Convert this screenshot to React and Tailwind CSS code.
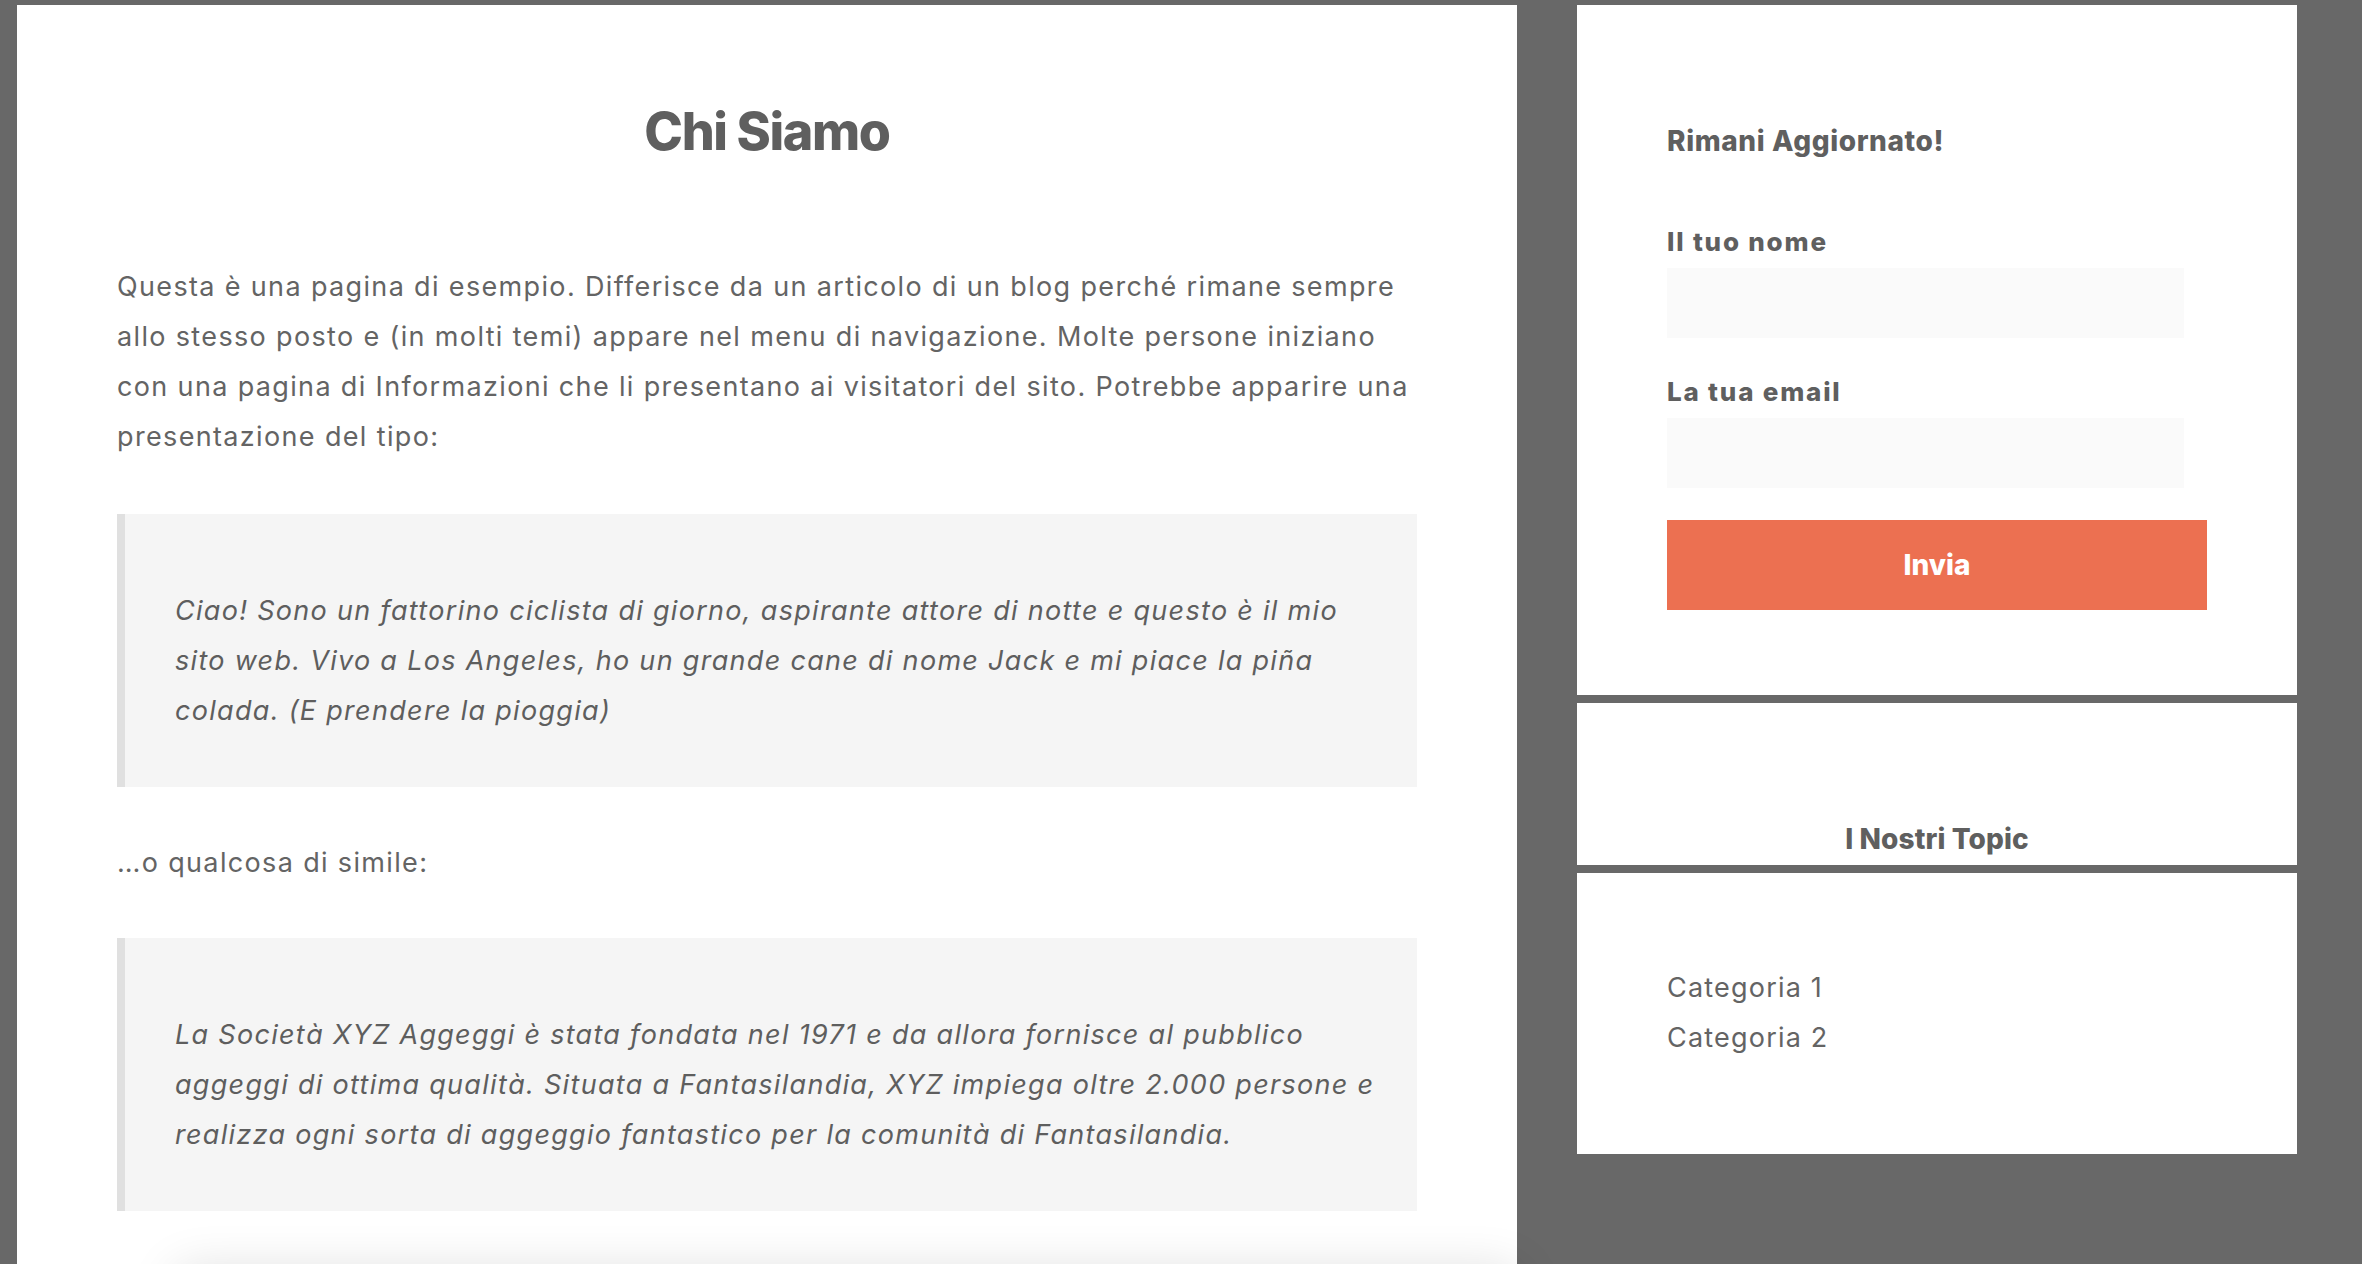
import React from 'react';

const Quote = ({ lines, className = '' }) => (
    <blockquote className={`border-l-[8px] border-[#e0e0e0] bg-[#f5f5f5] pl-[50px] pr-[50px] pt-[72px] pb-[51px] ${className}`}>
        <p className="text-[27px] leading-[50px] italic tracking-[1.3px] whitespace-nowrap text-[#5e5e5e]">
            {lines.map((line, i) => (
                <React.Fragment key={i}>
                    {line}
                    {i < lines.length - 1 && <br />}
                </React.Fragment>
            ))}
        </p>
    </blockquote>
);

const App = () => {
    return (
        <div className="min-h-screen bg-[#686868] pl-[17px] pt-[5px] flex items-start gap-[60px] font-['Inter',sans-serif] text-[#646464]">
            <main className="w-[1500px] shrink-0 bg-white px-[100px] pt-[97px]">
                <h1 className="text-center text-[52px] leading-[60px] font-extrabold tracking-[-1.4px] text-[#5f5f5f]">Chi Siamo</h1>

                <p className="mt-[100px] text-[27px] leading-[50px] tracking-[1.35px] whitespace-nowrap">
                    Questa è una pagina di esempio. Differisce da un articolo di un blog perché rimane sempre<br />
                    allo stesso posto e (in molti temi) appare nel menu di navigazione. Molte persone iniziano<br />
                    con una pagina di Informazioni che li presentano ai visitatori del sito. Potrebbe apparire una<br />
                    presentazione del tipo:
                </p>

                <Quote
                    className="mt-[52px]"
                    lines={[
                        'Ciao! Sono un fattorino ciclista di giorno, aspirante attore di notte e questo è il mio',
                        'sito web. Vivo a Los Angeles, ho un grande cane di nome Jack e mi piace la piña',
                        'colada. (E prendere la pioggia)'
                    ]}
                />

                <p className="mt-[51px] text-[27px] leading-[50px] tracking-[1.35px]">…o qualcosa di simile:</p>

                <Quote
                    className="mt-[50px]"
                    lines={[
                        'La Società XYZ Aggeggi è stata fondata nel 1971 e da allora fornisce al pubblico',
                        'aggeggi di ottima qualità. Situata a Fantasilandia, XYZ impiega oltre 2.000 persone e',
                        'realizza ogni sorta di aggeggio fantastico per la comunità di Fantasilandia.'
                    ]}
                />

                {/* footer card peeking in from below */}
                <div className="mt-[60px] ml-[60px] -mr-[100px] h-[120px] bg-white shadow-[0_0_50px_rgba(0,0,0,0.14)]"></div>
            </main>

            <aside className="w-[720px] shrink-0 flex flex-col gap-2">
                <section className="bg-white px-[90px] pt-[116px] pb-[85px]">
                    <h3 className="text-[28px] leading-[40px] font-extrabold tracking-[0.6px] text-[#5f5f5f]">Rimani Aggiornato!</h3>

                    <label className="mt-[61px] block text-[26px] leading-[40px] font-extrabold tracking-[1.8px] text-[#5f5f5f]">Il tuo nome</label>
                    <input type="text" className="mt-[6px] block w-[517px] h-[70px] bg-[#fafafa] outline-none" />

                    <label className="mt-[34px] block text-[26px] leading-[40px] font-extrabold tracking-[1.8px] text-[#5f5f5f]">La tua email</label>
                    <input type="email" className="mt-[6px] block w-[517px] h-[70px] bg-[#fafafa] outline-none" />

                    <button type="button" className="mt-[32px] block w-full h-[90px] bg-[#ec7051] text-white text-[28px] font-extrabold">
                        Invia
                    </button>
                </section>

                <section className="bg-white px-[90px] pt-[116px] pb-[6px] text-center">
                    <h3 className="text-[28px] leading-[40px] font-extrabold tracking-[0.1px] text-[#5f5f5f]">I Nostri Topic</h3>
                </section>

                <section className="bg-white px-[90px] pt-[90px] pb-[91px]">
                    <ul className="text-[27px] leading-[50px] tracking-[1.2px]">
                        <li>Categoria 1</li>
                        <li>Categoria 2</li>
                    </ul>
                </section>
            </aside>
        </div>
    );
};

export default App;
